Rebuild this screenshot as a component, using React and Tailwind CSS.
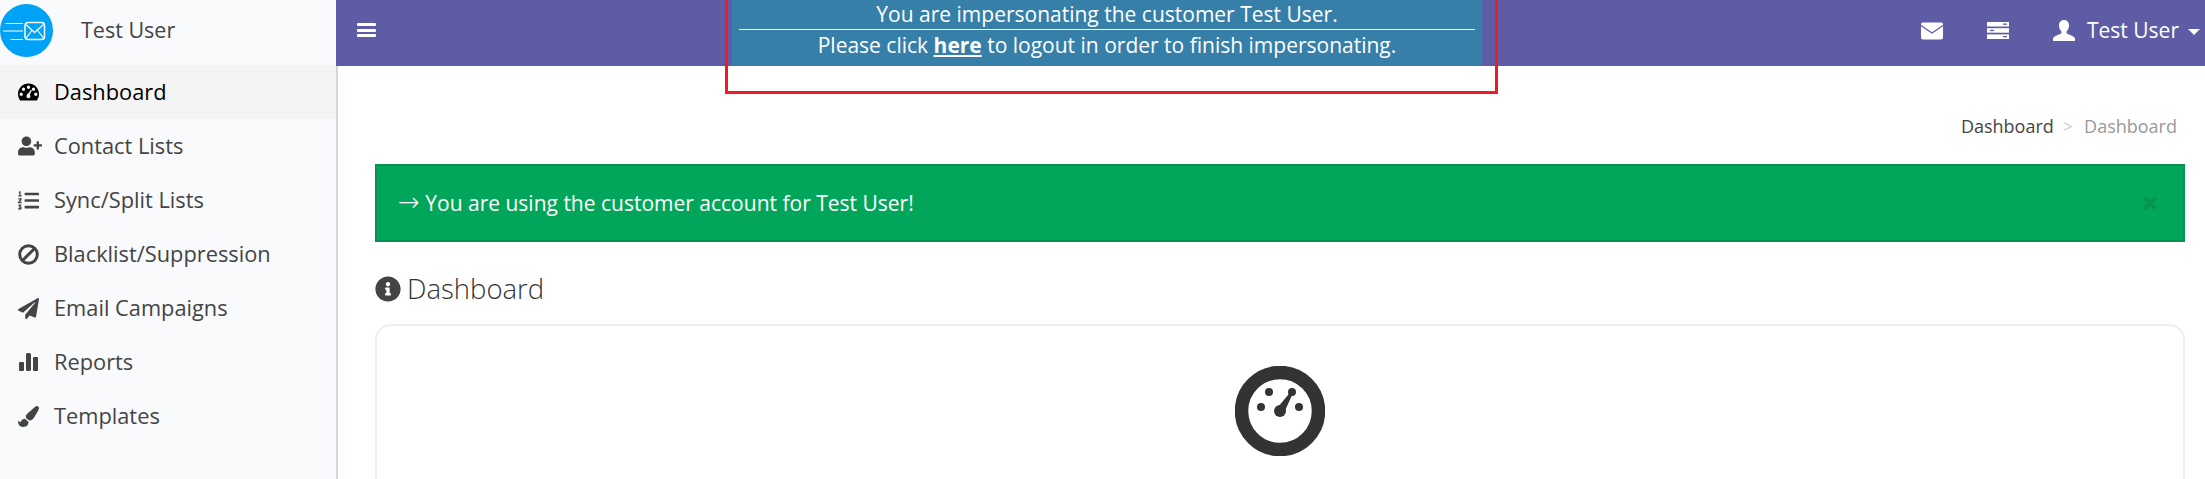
import React from "react";
import { FaUserPlus, FaListOl, FaPaperPlane, FaPaintBrush, FaInfoCircle } from "react-icons/fa";

const font = "font-['Open_Sans','Noto_Sans',sans-serif]";

function DashIcon() {
  return (
    <svg width="21" height="18" viewBox="0 0 21 18" className="shrink-0">
      <path fillRule="evenodd" fill="currentColor" d="M10.5 0.5C4.7 0.5 0 5.2 0 11c0 2.4.8 4.6 2.2 6.4h16.6C20.200 15.600 21 13.400 21 11 21 5.200 16.300.5 10.500.5ZM10.500 2.500a1.700 1.700 0 1 1 0 3.400 1.700 1.700 0 0 1 0-3.400ZM5.500 4.500a1.700 1.700 0 1 1 0 3.400 1.700 1.700 0 0 1 0-3.400ZM15.500 4.500a1.700 1.700 0 1 1 0 3.400 1.700 1.700 0 0 1 0-3.400ZM3.200 9.500a1.700 1.700 0 1 1 0 3.400 1.700 1.700 0 0 1 0-3.400ZM17.800 9.500a1.700 1.700 0 1 1 0 3.400 1.700 1.700 0 0 1 0-3.400ZM12.800 6.800 13.900 7.300 11.800 11.800A2 2 0 1 1 8.600 12.500a2 2 0 0 1 1.800-2Z" />
    </svg>
  );
}

function BanIcon() {
  return (
    <svg width="21" height="21" viewBox="0 0 21 21" className="shrink-0">
      <circle cx="10.500" cy="10.500" r="8.800" fill="none" stroke="currentColor" strokeWidth="3" />
      <path d="M4.500 16.500 16.500 4.500" stroke="currentColor" strokeWidth="3" />
    </svg>
  );
}

function BarsIcon() {
  return (
    <svg width="20" height="20" viewBox="0 0 20 20" className="shrink-0">
      <rect x="1" y="10" width="5" height="9" rx="1" fill="currentColor" />
      <rect x="8" y="1" width="5" height="18" rx="1.500" fill="currentColor" />
      <rect x="15" y="5" width="5" height="14" rx="1" fill="currentColor" />
    </svg>
  );
}

function Logo() {
  return (
    <svg width="53" height="53" viewBox="0 0 53 53" className="shrink-0">
      <circle cx="26.500" cy="26.500" r="26.500" fill="#00a2f5" />
      <g fill="none" stroke="#fff" strokeWidth="1.200" strokeLinecap="round" strokeLinejoin="round">
        <path d="M6 19.500H22.500M3.500 27H22.500M11 35.500H22.500" />
        <rect x="25" y="18.500" width="19.500" height="17" rx="3" strokeWidth="1.500" />
        <path d="M26.500 21 34.500 28.500 43 21M26.500 33.500 31.500 27M43 33.500 38 27" />
      </g>
    </svg>
  );
}

function MailIcon() {
  return (
    <svg width="22" height="18" viewBox="0 0 22 18" className="shrink-0">
      <rect y="0.500" width="22" height="17" rx="2" fill="#fff" />
      <path d="M0 3.500 11 11 22 3.500" fill="none" stroke="#5f5ca6" strokeWidth="1.300" />
    </svg>
  );
}

function ServerIcon() {
  return (
    <svg width="22" height="17" viewBox="0 0 22 17" className="shrink-0">
      <rect width="22" height="4.500" fill="#fff" />
      <rect y="6.200" width="22" height="4.500" fill="#fff" />
      <rect y="12.400" width="22" height="4.600" fill="#fff" />
      <rect x="16" y="1.500" width="4" height="1.300" fill="#5f5ca6" />
      <rect x="3" y="7.800" width="4" height="1.300" fill="#5f5ca6" />
      <rect x="16" y="14" width="4" height="1.300" fill="#5f5ca6" />
    </svg>
  );
}

function UserIcon() {
  return (
    <svg width="22" height="21" viewBox="0 0 22 21" className="shrink-0">
      <path fill="#fff" d="M11 0C7.800 0 6 2.400 6 5.400c0 2.400 1 4.600 2.400 5.900.3.800.2 1.800-.4 2.300C6 15.200 1 15.800 0 18.500V21h22v-2.500c-1-2.700-6-3.300-8-4.900-.6-.5-.7-1.500-.4-2.300C15 10 16 7.800 16 5.400 16 2.400 14.200 0 11 0Z" />
    </svg>
  );
}

function Gauge() {
  return (
    <svg width="90" height="90" viewBox="-45 -45 90 90" className="block">
      <circle r="38.500" fill="none" stroke="#333" strokeWidth="13.500" />
      <circle cx="-11" cy="-19" r="4" fill="#333" />
      <circle cx="-19" cy="-4" r="4" fill="#333" />
      <circle cx="19" cy="-4" r="4" fill="#333" />
      <circle cx="12" cy="-19" r="4" fill="#333" />
      <circle r="6" fill="#333" />
      <path d="M-2 -4 10.500 -19 13 -18 4 2Z" fill="#333" />
    </svg>
  );
}

const items = [
  [<DashIcon key="d" />, "Dashboard", true],
  [<FaUserPlus key="u" className="shrink-0 text-[24px]" />, "Contact Lists"],
  [<FaListOl key="l" className="shrink-0 text-[21px]" />, "Sync/Split Lists"],
  [<BanIcon key="b" />, "Blacklist/Suppression"],
  [<FaPaperPlane key="p" className="shrink-0 text-[21px]" />, "Email Campaigns"],
  [<BarsIcon key="r" />, "Reports"],
  [<FaPaintBrush key="t" className="shrink-0 text-[21px]" />, "Templates"],
];

export default function App() {
  return (
    <div className={`flex h-[479px] w-[2205px] overflow-hidden bg-white text-[#444] ${font}`}>
      <aside className="flex w-[338px] shrink-0 flex-col border-r-2 border-[#d2d6de] bg-[#f9fafc]">
        <div className="flex h-[65px] items-center pb-[4px]">
          <Logo />
          <span className="ml-[28px] text-[21.5px] font-medium">Test User</span>
        </div>
        <nav className="flex flex-col">
          {items.map(([icon, label, active]) => (
            <div
              key={label}
              className={`flex h-[54px] items-center ${active ? "bg-[#f4f4f4] text-black" : "text-[#444]"}`}
            >
              <span className="flex w-[54px] justify-start pl-[18px]">{icon}</span>
              <span className="pt-[1px] text-[21.8px] font-medium">{label}</span>
            </div>
          ))}
        </nav>
      </aside>

      <div className="flex min-w-0 flex-1 flex-col">
        <header className="ml-[-2px] flex h-[66px] shrink-0 items-center bg-[#5f5ca6] text-white">
          <div className="mb-[6px] ml-[21px] flex h-[14px] w-[19px] flex-col justify-between">
            <span className="block h-[3px] rounded-[1px] bg-white" />
            <span className="block h-[3px] rounded-[1px] bg-white" />
            <span className="block h-[3px] rounded-[1px] bg-white" />
          </div>
          <div className="relative ml-[356px] h-full w-[750px] shrink-0 bg-[#367fa9] text-center text-[21px] leading-[29px]">
            <div className="mx-[7px] border-b border-white">You are impersonating the customer Test User.</div>
            <div className="pt-[1px]">
              Please click <a className="font-bold underline">here</a> to logout in order to finish impersonating.
            </div>
            <div className="absolute -left-[7px] -right-[16px] top-0 h-[94px] border-x-[3px] border-b-[3px] border-[#ed1c24]" />
          </div>
          <div className="mb-[5px] ml-[439px] flex items-center">
            <MailIcon />
            <span className="ml-[44px]"><ServerIcon /></span>
            <span className="ml-[44px]"><UserIcon /></span>
            <span className="ml-[12px] text-[21px]">Test User</span>
            <span className="ml-[9px] mt-[2px] h-0 w-0 border-x-[6px] border-t-[6px] border-x-transparent border-t-white" />
          </div>
        </header>

        <main className="flex min-h-0 flex-1 flex-col pl-[37px] pr-[20px]">
          <div className="mt-[48px] flex h-[24px] items-center justify-end pr-[8px] text-[18px]">
            <span className="text-[#444]">Dashboard</span>
            <span className="ml-[9px] text-[#ccc]">&gt;</span>
            <span className="ml-[11px] text-[#999]">Dashboard</span>
          </div>
          <div className="mt-[26px] flex h-[78px] shrink-0 items-center justify-between border-2 border-[#089150] bg-[#02a65a] pl-[21px] pr-[24px] text-[21px] text-white">
            <span className="pt-[1px]"><span className="font-['DejaVu_Sans',sans-serif] text-[26px] leading-none font-extralight">→</span> You are using the customer account for Test User!</span>
            <span className="text-[30px] font-bold leading-none text-[#089150]">×</span>
          </div>
          <h2 className="mt-[30px] flex h-[34px] shrink-0 items-center text-[27.5px] font-light text-[#333]">
            <FaInfoCircle className="mr-[6px] text-[26px] text-[#444]" />
            Dashboard
          </h2>
          <div className="mt-[18px] flex-1 rounded-t-[16px] border-2 border-b-0 border-[#eee] pt-[40px]">
            <div className="flex justify-center">
              <Gauge />
            </div>
          </div>
        </main>
      </div>
    </div>
  );
}
